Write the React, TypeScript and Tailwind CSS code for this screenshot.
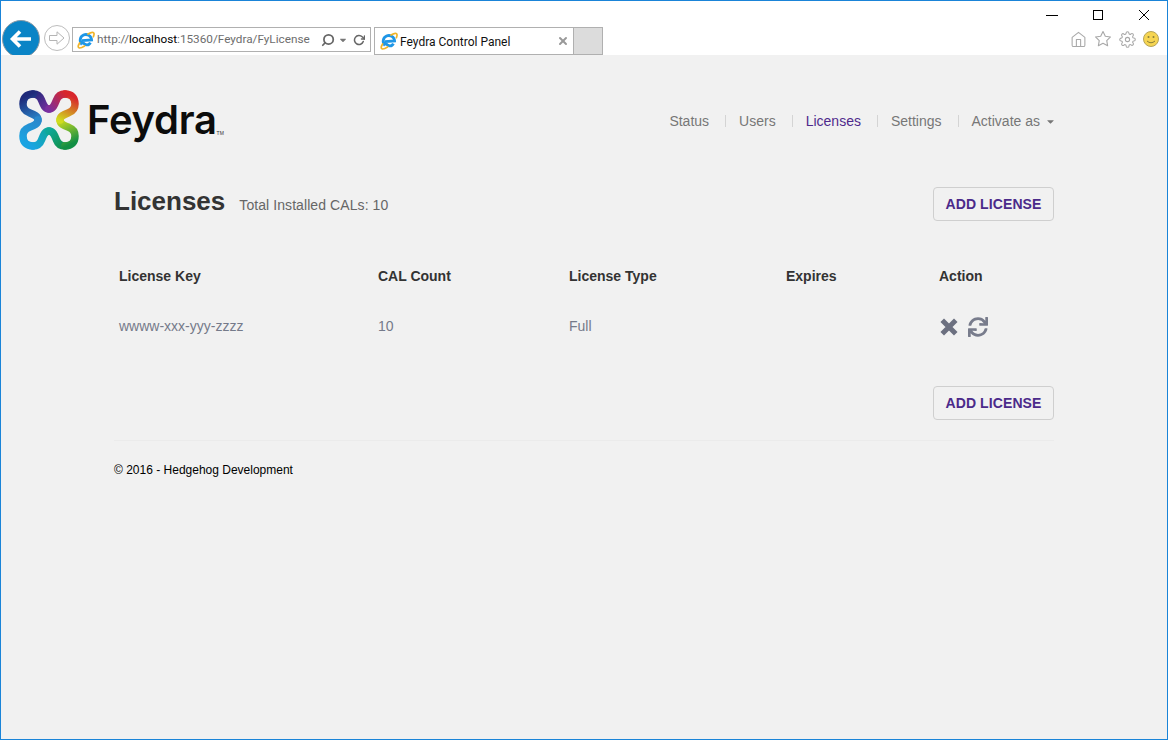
import React from 'react';
import { FaSync, FaCaretDown } from 'react-icons/fa';
import { FiSearch, FiRotateCw, FiX, FiHome, FiStar, FiSettings } from 'react-icons/fi';

const IeIcon: React.FC<{ size?: number }> = ({ size = 18 }) => (
  <svg width={size} height={size} viewBox="0 0 18 18" className="shrink-0">
    <path d="M5 13.4 A5.7 5.7 0 1 1 14.6 9 L5 9.6 M6 9.5 A3.9 3.9 0 0 0 13.4 11.6" fill="none" stroke="#1e96e6" strokeWidth="2.8" />
    <path d="M2.6 12 C-0.8 17.6 2.6 18.2 7.6 15 M11 3 C15.6 0.2 18.4 1 16.4 5.6" fill="none" stroke="#f0b429" strokeWidth="1.7" strokeLinecap="round" />
  </svg>
);

const segments = [
  { d: 'M30 19 C26 19 24.5 15 22.5 10 C21 6 18.5 4 14 4', from: '#7a2fa0', to: '#1e2a7a', x1: 30, y1: 20, x2: 13, y2: 4 },
  { d: 'M14 4 C7.5 4 4 7.5 4 14 C4 18.5 6 21 10 22.5 C15 24.5 19 26 19 30', from: '#1e2a7a', to: '#2a88cc', x1: 8, y1: 6, x2: 20, y2: 30 },
  { d: 'M19 30 C19 34 15 35.5 10 37.5 C6 39 4 41.5 4 46 C4 52.5 7.5 56 14 56', from: '#2a88cc', to: '#1aa4e2', x1: 20, y1: 30, x2: 8, y2: 54 },
  { d: 'M14 56 C18.5 56 21 54 22.5 50 C24.5 45 26 41 30 41', from: '#1aa4e2', to: '#0ea89a', x1: 13, y1: 56, x2: 30, y2: 40 },
  { d: 'M30 41 C34 41 35.5 45 37.5 50 C39 54 41.5 56 46 56', from: '#0ea89a', to: '#128f44', x1: 30, y1: 40, x2: 47, y2: 56 },
  { d: 'M46 56 C52.5 56 56 52.5 56 46 C56 41.5 54 39 50 37.5 C45 35.5 41 34 41 30', from: '#128f44', to: '#d0dc1e', x1: 52, y1: 54, x2: 40, y2: 30 },
  { d: 'M41 30 C41 26 45 24.5 50 22.5 C54 21 56 18.5 56 14 C56 7.5 52.5 4 46 4', from: '#d0dc1e', to: '#d8262c', x1: 40, y1: 30, x2: 52, y2: 6 },
  { d: 'M46 4 C41.5 4 39 6 37.5 10 C35.5 15 34 19 30 19', from: '#d8262c', to: '#7a2fa0', x1: 47, y1: 4, x2: 30, y2: 20 },
];

const LogoMark = () => (
  <svg width="60" height="60" viewBox="0 0 60 60" className="shrink-0">
    <defs>
      {segments.map((s, i) => (
        <linearGradient key={i} id={`seg${i}`} gradientUnits="userSpaceOnUse" x1={s.x1} y1={s.y1} x2={s.x2} y2={s.y2}>
          <stop offset="0" stopColor={s.from} />
          <stop offset="1" stopColor={s.to} />
        </linearGradient>
      ))}
    </defs>
    {segments.map((s, i) => (
      <path key={i} d={s.d} fill="none" stroke={`url(#seg${i})`} strokeWidth="7.5" strokeLinecap="round" />
    ))}
  </svg>
);

const BrowserChrome = () => (
  <div className="relative h-[54px] shrink-0 flex overflow-hidden bg-white font-['Roboto',sans-serif]">
    <div className="flex items-start pl-[1px] pt-[19px]">
      <div className="w-[38px] h-[38px] rounded-full bg-[#0a84c6] border border-[#8a9aa6] flex items-center justify-center">
        <svg width="24" height="20" viewBox="0 0 24 20">
          <path d="M22 10 H4 M11 2.5 L3.5 10 L11 17.5" fill="none" stroke="#fff" strokeWidth="3.6" />
        </svg>
      </div>
      <div className="ml-[4px] mt-[5px] w-[26px] h-[26px] rounded-full border border-[#bdbdbd] flex items-center justify-center">
        <svg width="18" height="16" viewBox="0 0 18 16">
          <path d="M1.5 5.5 H9 V1.8 L16 8 L9 14.2 V10.5 H1.5 Z" fill="none" stroke="#b5b5b5" strokeWidth="1" />
        </svg>
      </div>
      <div className="ml-[2px] mt-[7px] w-[299px] h-[25px] border border-[#b0b0b0] flex items-center pl-[4px] pr-[5px] text-[11.75px] text-[#6d6d6d]">
        <IeIcon />
        <span className="ml-[2px] mt-[1px] whitespace-nowrap">http://<span className="text-black">localhost</span>:15360/Feydra/FyLicense</span>
        <FiSearch className="ml-auto -scale-x-100 text-[#666]" size={14} strokeWidth={3} />
        <FaCaretDown className="ml-[3px] text-[#777]" size={10} />
        <FiRotateCw className="ml-[5px] text-[#666]" size={12} strokeWidth={3} />
      </div>
      <div className="ml-[3px] mt-[7px] w-[200px] h-[28px] border border-[#b0b0b0] flex items-center pl-[5px] pr-[4px] text-[12px] text-[#111]">
        <IeIcon />
        <span className="ml-[2px] mt-[1px] whitespace-nowrap">Feydra Control Panel</span>
        <FiX className="ml-auto text-[#999]" size={12} strokeWidth={4} />
      </div>
      <div className="mt-[7px] w-[29px] h-[28px] border border-l-0 border-[#b0b0b0] bg-[#dcdcdc]" />
    </div>
    <div className="ml-auto flex flex-col items-end pr-[8px]">
      <div className="flex items-center h-[28px] pr-[9px] gap-[35px]">
        <div className="w-[12px] h-[1px] bg-black" />
        <div className="w-[10px] h-[10px] border border-black" />
        <svg width="12" height="12" viewBox="0 0 12 12">
          <path d="M1 1 L11 11 M11 1 L1 11" stroke="#000" strokeWidth="1" />
        </svg>
      </div>
      <div className="flex items-center gap-[7px] mt-[1px] text-[#a8a8a8]">
        <FiHome size={17} strokeWidth={1.5} />
        <FiStar size={18} strokeWidth={1.5} />
        <FiSettings size={17} strokeWidth={1.5} />
        <svg width="16" height="16" viewBox="0 0 16 16">
          <circle cx="8" cy="8" r="7.5" fill="#f6d552" stroke="#b5a45a" />
          <circle cx="5.5" cy="6" r="1" fill="#8a7f3a" />
          <circle cx="10.5" cy="6" r="1" fill="#8a7f3a" />
          <path d="M4 10 Q8 13.5 12 10" fill="none" stroke="#8a7f3a" />
        </svg>
      </div>
    </div>
  </div>
);

const navItems = ['Status', 'Users', 'Licenses', 'Settings'];

const Nav = () => (
  <nav className="flex items-center mt-[2px] -mr-[2px] text-[14px] text-[#777]">
    {navItems.map((item) => (
      <React.Fragment key={item}>
        <span className={item === 'Licenses' ? 'text-[#4f2a8c]' : ''}>{item}</span>
        <span className="w-[1px] h-[12px] ml-[16px] mr-[13px] bg-[#d4d4d4]" />
      </React.Fragment>
    ))}
    <span>Activate as</span>
    <FaCaretDown className="ml-[5px]" size={11} />
  </nav>
);

const AddLicense = () => (
  <button className="w-[121px] h-[34px] rounded-[4px] border border-[#cfcfcf] text-[14px] font-bold tracking-[0.1px] text-[#4b2a8a]">
    ADD LICENSE
  </button>
);

const App: React.FC = () => {
  return (
    <div className="w-[1168px] h-[740px] flex flex-col overflow-hidden border border-[#1a84d8] bg-[#f1f1f1] font-['Liberation_Sans',Arial,sans-serif]">
      <BrowserChrome />
      <header className="flex items-center justify-between h-[110px] pt-[20px] pl-[18px] pr-[113px]">
        <div className="flex items-center">
          <LogoMark />
          <span className="ml-[8px] font-['Inter',sans-serif] font-semibold text-[40px] tracking-[-0.3px] text-[#0c0c0c] leading-none">Feydra</span>
          <span className="mt-[28px] text-[5px] text-[#333]">TM</span>
        </div>
        <Nav />
      </header>
      <main className="mx-[113px] pt-[16px]">
        <div className="flex items-center justify-between h-[46px]">
          <div className="flex items-baseline pb-[6px]">
            <h1 className="text-[26px] font-bold text-[#333]">Licenses</h1>
            <span className="ml-[14px] text-[14px] tracking-[0.08px] text-[#666]">Total Installed CALs: 10</span>
          </div>
          <AddLicense />
        </div>
        <table className="w-full mt-[24px] table-fixed text-[14px] text-left">
          <colgroup>
            <col className="w-[259px]" />
            <col className="w-[191px]" />
            <col className="w-[217px]" />
            <col className="w-[153px]" />
            <col />
          </colgroup>
          <thead>
            <tr className="h-[50px] text-[#333]">
              <th className="px-[5px] font-bold">License Key</th>
              <th className="px-[5px] font-bold">CAL Count</th>
              <th className="px-[5px] font-bold">License Type</th>
              <th className="px-[5px] font-bold">Expires</th>
              <th className="px-[5px] font-bold">Action</th>
            </tr>
          </thead>
          <tbody>
            <tr className="h-[50px] text-[#757a8a]">
              <td className="px-[5px]">wwww-xxx-yyy-zzzz</td>
              <td className="px-[5px]">10</td>
              <td className="px-[5px]">Full</td>
              <td className="px-[5px]" />
              <td className="px-[5px]">
                <div className="flex items-center gap-[9px] mt-[1px] text-[#6c7080] text-[20px]">
                  <svg width="20" height="20" viewBox="0 0 20 20">
                    <path d="M5 5 L15 15 M15 5 L5 15" stroke="currentColor" strokeWidth="5" strokeLinecap="square" />
                  </svg>
                  <FaSync className="mt-[1px] text-[#787c8c]" />
                </div>
              </td>
            </tr>
          </tbody>
        </table>
        <div className="flex justify-end mt-[35px]">
          <AddLicense />
        </div>
        <div className="mt-[20px] border-t border-[#ebebeb] pt-[20px] text-[12px] text-black">
          © 2016 - Hedgehog Development
        </div>
      </main>
    </div>
  );
};

export default App;
